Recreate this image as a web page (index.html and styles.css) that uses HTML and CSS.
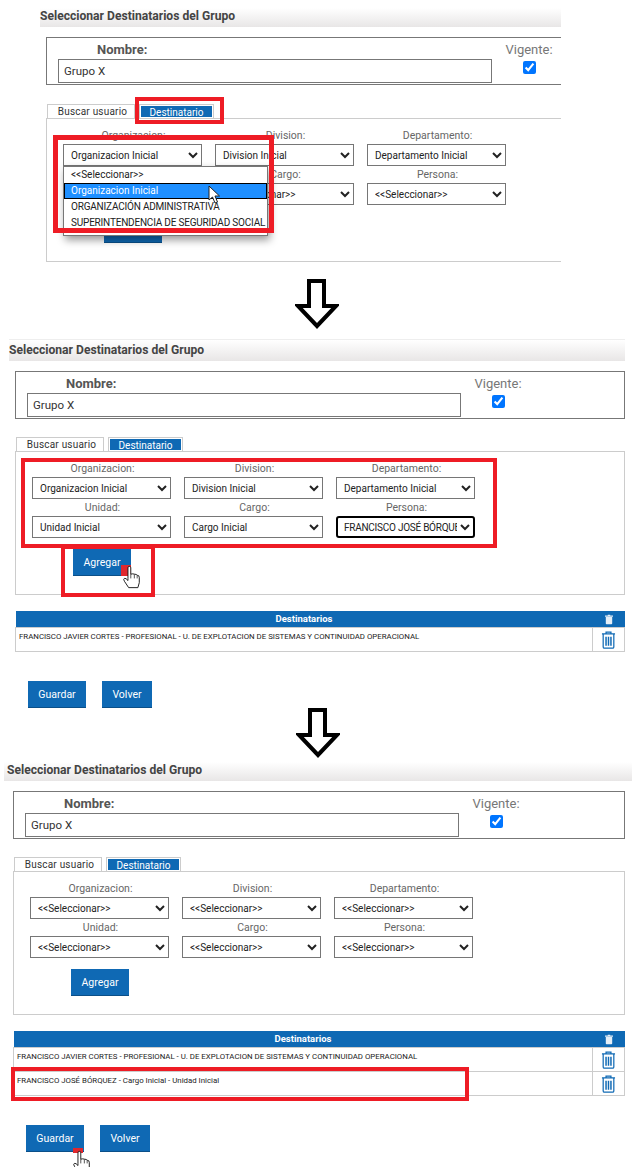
FILE: index.html
```html
<!DOCTYPE html>
<html lang="es">
<head>
<meta charset="utf-8">
<title>Seleccionar Destinatarios del Grupo</title>
<link rel="stylesheet" href="styles.css">
</head>
<body>
<svg class="defs" width="0" height="0" aria-hidden="true">
  <symbol id="trash" viewBox="0 0 18 22">
    <path d="M6 3V1.500h6V3M1 3.500h16M2.500 4v15.500q0 1.500 1.500 1.500h10q1.500 0 1.500-1.500V4" fill="none" stroke="currentColor" stroke-width="1.500"/>
    <path d="M6 7v11M9 7v11M12 7v11" fill="none" stroke="currentColor" stroke-width="1.800"/>
  </symbol>
  <symbol id="trash-solid" viewBox="0 0 10 12">
    <path d="M3.500 1V0h3v1H10v1.500H0V1zM1 3h8v8q0 1-1 1H2q-1 0-1-1z" fill="currentColor"/>
  </symbol>
  <symbol id="hand" viewBox="0 0 24 32">
    <path d="M7 18V3q0-2 2-2t2 2v9q3-1 5 0 3 0 4 1.500 3 0 3 3V24l-2 7H8l-6-9q-2-3 0-4t5 3z" fill="#fff" stroke="#111" stroke-width="1.300"/>
    <path d="M11 12v6M16 12.500V18M20 14v4" fill="none" stroke="#111" stroke-width="1"/>
  </symbol>
  <symbol id="down-arrow" viewBox="0 0 44 50">
    <path d="M14 2h15v25h12L22 47 3 27h11z" fill="#fff" stroke="#000" stroke-width="4" stroke-linejoin="miter"/>
  </symbol>
</svg>

<main class="page">
  <section class="panel panel-one">
    <h2 class="title">Seleccionar Destinatarios del Grupo</h2>
    <div class="name-box">
      <div class="name-col">
        <label class="name-label">Nombre:</label>
        <input class="name-input" type="text" value="Grupo X">
      </div>
      <div class="active-col">
        <span class="active-label">Vigente:</span>
        <input class="active-check" type="checkbox" checked>
      </div>
    </div>
    <div class="tabs">
      <span class="tab">Buscar usuario</span>
      <span class="tab tab-active">Destinatario</span>
    </div>
    <div class="tab-body">
      <div class="filters">
        <label class="field"><span>Organizacion:</span><select><option>Organizacion Inicial</option></select></label>
        <label class="field"><span>Division:</span><select><option>Division Inicial</option></select></label>
        <label class="field"><span>Departamento:</span><select><option>Departamento Inicial</option></select></label>
        <label class="field"><span>Unidad:</span><select><option>&lt;&lt;Seleccionar&gt;&gt;</option></select></label>
        <label class="field"><span>Cargo:</span><select><option>&lt;&lt;Seleccionar&gt;&gt;</option></select></label>
        <label class="field"><span>Persona:</span><select><option>&lt;&lt;Seleccionar&gt;&gt;</option></select></label>
      </div>
      <button class="btn btn-add" type="button">Agregar</button>
    </div>
    <ul class="dropdown">
      <li>&lt;&lt;Seleccionar&gt;&gt;</li>
      <li class="selected">Organizacion Inicial</li>
      <li class="upper">ORGANIZACIÓN ADMINISTRATIVA</li>
      <li class="upper">SUPERINTENDENCIA DE SEGURIDAD SOCIAL</li>
    </ul>
  </section>

  <section class="panel panel-two">
    <h2 class="title title-ruled">Seleccionar Destinatarios del Grupo</h2>
    <div class="name-box">
      <div class="name-col">
        <label class="name-label">Nombre:</label>
        <input class="name-input" type="text" value="Grupo X">
      </div>
      <div class="active-col">
        <span class="active-label">Vigente:</span>
        <input class="active-check" type="checkbox" checked>
      </div>
    </div>
    <div class="tabs">
      <span class="tab">Buscar usuario</span>
      <span class="tab tab-active">Destinatario</span>
    </div>
    <div class="tab-body">
      <div class="filters">
        <label class="field"><span>Organizacion:</span><select><option>Organizacion Inicial</option></select></label>
        <label class="field"><span>Division:</span><select><option>Division Inicial</option></select></label>
        <label class="field"><span>Departamento:</span><select><option>Departamento Inicial</option></select></label>
        <label class="field"><span>Unidad:</span><select><option>Unidad Inicial</option></select></label>
        <label class="field"><span>Cargo:</span><select><option>Cargo Inicial</option></select></label>
        <label class="field"><span>Persona:</span><select class="focused"><option>FRANCISCO JOSÉ BÓRQUEZ</option></select></label>
      </div>
      <button class="btn btn-add" type="button">Agregar</button>
    </div>
    <table class="recipients">
      <thead><tr><th>Destinatarios</th><th class="col-icon"><svg class="icon-head"><use href="#trash-solid"/></svg></th></tr></thead>
      <tbody>
        <tr><td>FRANCISCO JAVIER CORTES - PROFESIONAL - U. DE EXPLOTACION DE SISTEMAS Y CONTINUIDAD OPERACIONAL</td><td class="col-icon"><svg class="icon-row"><use href="#trash"/></svg></td></tr>
      </tbody>
    </table>
    <div class="actions">
      <button class="btn" type="button">Guardar</button>
      <button class="btn btn-back" type="button">Volver</button>
    </div>
  </section>

  <section class="panel panel-three">
    <h2 class="title title-wide">Seleccionar Destinatarios del Grupo</h2>
    <div class="name-box">
      <div class="name-col">
        <label class="name-label">Nombre:</label>
        <input class="name-input" type="text" value="Grupo X">
      </div>
      <div class="active-col">
        <span class="active-label">Vigente:</span>
        <input class="active-check" type="checkbox" checked>
      </div>
    </div>
    <div class="tabs">
      <span class="tab">Buscar usuario</span>
      <span class="tab tab-active">Destinatario</span>
    </div>
    <div class="tab-body">
      <div class="filters">
        <label class="field"><span>Organizacion:</span><select><option>&lt;&lt;Seleccionar&gt;&gt;</option></select></label>
        <label class="field"><span>Division:</span><select><option>&lt;&lt;Seleccionar&gt;&gt;</option></select></label>
        <label class="field"><span>Departamento:</span><select><option>&lt;&lt;Seleccionar&gt;&gt;</option></select></label>
        <label class="field"><span>Unidad:</span><select><option>&lt;&lt;Seleccionar&gt;&gt;</option></select></label>
        <label class="field"><span>Cargo:</span><select><option>&lt;&lt;Seleccionar&gt;&gt;</option></select></label>
        <label class="field"><span>Persona:</span><select><option>&lt;&lt;Seleccionar&gt;&gt;</option></select></label>
      </div>
      <button class="btn btn-add" type="button">Agregar</button>
    </div>
    <table class="recipients">
      <thead><tr><th>Destinatarios</th><th class="col-icon"><svg class="icon-head"><use href="#trash-solid"/></svg></th></tr></thead>
      <tbody>
        <tr><td>FRANCISCO JAVIER CORTES - PROFESIONAL - U. DE EXPLOTACION DE SISTEMAS Y CONTINUIDAD OPERACIONAL</td><td class="col-icon"><svg class="icon-row"><use href="#trash"/></svg></td></tr>
        <tr><td>FRANCISCO JOSÉ BÓRQUEZ - Cargo Inicial - Unidad Inicial</td><td class="col-icon"><svg class="icon-row"><use href="#trash"/></svg></td></tr>
      </tbody>
    </table>
    <div class="actions">
      <button class="btn" type="button">Guardar</button>
      <button class="btn btn-back" type="button">Volver</button>
    </div>
  </section>

  <div class="mark mark-tab"></div>
  <div class="mark mark-list"></div>
  <div class="mark mark-filters"></div>
  <div class="mark mark-add"></div>
  <div class="mark mark-row"></div>
  <div class="patch patch-add"></div>
  <div class="patch patch-save"></div>
  <svg class="arrow arrow-one"><use href="#down-arrow"/></svg>
  <svg class="arrow arrow-two"><use href="#down-arrow"/></svg>
  <svg class="hand hand-add"><use href="#hand"/></svg>
  <svg class="hand hand-save"><use href="#hand"/></svg>
  <svg class="pointer" viewBox="0 0 12 19"><path d="M1 1v14l3.500-3 2.500 6 2.500-1-2.500-6h4.500z" fill="#fff" stroke="#222" stroke-width="1"/></svg>
</main>
</body>
</html>
```

FILE: styles.css
```css
* { box-sizing: border-box; }

html, body {
  margin: 0;
  padding: 0;
  background: #fff;
}

body {
  height: 1167px;
  overflow: hidden;
  font-family: Roboto, "Liberation Sans", sans-serif;
  color: #333;
}

.defs { position: absolute; }

.page {
  position: relative;
  height: 1167px;
  overflow: hidden;
  padding-top: 8px;
}

.panel { position: relative; }

.panel-one {
  margin-left: 40px;
  width: 521px;
}

.panel-two {
  margin: 77px 0 0 9px;
  width: 616px;
}

.panel-three {
  margin: 54px 0 0 7px;
  width: 618px;
}

.title {
  margin: 0;
  height: 19px;
  font-size: 12.100px;
  font-weight: 700;
  line-height: 17px;
  color: #444;
  background: linear-gradient(#fff, #e8e6e6);
}

.title-ruled {
  height: 22px;
  line-height: 21px;
  border-top: 1px solid #eee;
}

.title-wide {
  margin: 0 -7px 0 -3px;
  padding-left: 3px;
}

.name-box {
  display: flex;
  margin: 10px 0 0 6px;
  height: 48px;
  border: 1px solid #777;
  border-right: 0;
}

.panel-two .name-box,
.panel-three .name-box {
  border-right: 1px solid #777;
}

.name-col {
  display: flex;
  flex-direction: column;
  width: 434px;
  margin-left: 11px;
}

.name-label {
  height: 21px;
  padding: 4px 0 0 39px;
  font-size: 13px;
  font-weight: 700;
  line-height: 16px;
  color: #555;
}

.name-input {
  width: 434px;
  height: 24px;
  padding: 0 5px;
  border: 1px solid #777;
  border-radius: 0;
  font: 11.500px Roboto, sans-serif;
  color: #333;
  outline: 0;
}

.active-col {
  display: flex;
  flex-direction: column;
  align-items: center;
  width: 46px;
  margin-left: 14px;
}

.active-label {
  height: 22px;
  padding-top: 4px;
  font-size: 13px;
  line-height: 16px;
  color: #777;
}

.active-check {
  width: 13px;
  height: 13px;
  margin: 1px 0 0;
}

.tabs {
  display: flex;
  gap: 4px;
  align-items: flex-end;
  margin: 18px 0 0 7px;
  height: 14px;
}

.panel-one .tabs { margin-top: 19px; }

.tab {
  width: 88px;
  height: 14px;
  padding-left: 3px;
  border: 1px solid #ccc;
  border-bottom: 0;
  font-size: 10px;
  line-height: 13px;
  letter-spacing: .2px;
  text-align: center;
  color: #333;
  background: #fff;
}

.tab-active {
  width: 75px;
  padding-left: 0;
  line-height: 15px;
  letter-spacing: 0;
  color: #fff;
  background: #0f69b4;
  box-shadow: 0 0 0 1px #fff inset;
}

.tab-body {
  margin-left: 6px;
  height: 144px;
  padding: 9px 0 0 16px;
  border: 1px solid #ccc;
  border-right: 0;
}

.panel-two .tab-body,
.panel-three .tab-body {
  border-right: 1px solid #ccc;
}

.filters {
  display: grid;
  grid-template-columns: repeat(3, 139px);
  column-gap: 13px;
}

.field {
  display: flex;
  flex-direction: column;
  height: 39px;
  font-size: 10.500px;
  line-height: 16px;
  text-align: center;
  color: #666;
}

.field span { padding-left: 2px; }

.field select {
  width: 139px;
  height: 22px;
  padding: 0 0 0 3px;
  border: 1px solid #767676;
  border-radius: 0;
  font: 10px Roboto, sans-serif;
  color: #222;
  background-color: #fff;
}

.field select.focused {
  padding-left: 2px;
  border: 2px solid #000;
  border-radius: 3px;
  letter-spacing: -.25px;
}

.btn {
  display: block;
  width: 58px;
  height: 27px;
  padding: 0;
  border: 0;
  border-bottom: 1px solid #0b4f88;
  font: 10.500px Roboto, sans-serif;
  color: #fff;
  background: #0f69b4;
}

.btn-add { margin: 10px 0 0 41px; }

.btn-back { width: 50px; }

.dropdown {
  position: absolute;
  top: 158px;
  left: 23px;
  width: 205px;
  height: 70px;
  margin: 0;
  padding: 0;
  list-style: none;
  font-size: 10px;
  line-height: 16px;
  color: #222;
  background: #fff;
  border: 1px solid #777;
  box-shadow: 2px 4px 8px rgba(0, 0, 0, .4);
}

.dropdown li {
  height: 16px;
  padding-left: 7px;
  white-space: nowrap;
}

.dropdown .upper { letter-spacing: -.2px; }

.dropdown .selected {
  padding-left: 6px;
  border: 1px solid #000;
  outline: 1px solid #000;
  outline-offset: -1px;
  line-height: 13px;
  color: #fff;
  background: #1e8fff;
}

.recipients {
  margin: 16px 0 0 6px;
  width: calc(100% - 6px);
  border-collapse: collapse;
  table-layout: fixed;
}

.recipients th {
  height: 16px;
  padding: 0;
  font-size: 9.500px;
  font-weight: 700;
  line-height: 16px;
  color: #fff;
  background: #0f69b4;
}

.recipients td {
  height: 24px;
  padding: 3px 3px 0;
  vertical-align: top;
  font-size: 7.850px;
  line-height: 12px;
  color: #222;
  border: 1px solid #ccc;
}

.recipients .col-icon {
  width: 32px;
  padding: 0;
  text-align: center;
  vertical-align: middle;
}

.recipients td.col-icon {
  padding-top: 3px;
  vertical-align: top;
}

.icon-head {
  display: block;
  width: 8px;
  height: 11px;
  margin: 0 auto;
  color: #e6eef6;
}

.icon-row {
  display: block;
  width: 15px;
  height: 18px;
  margin: 0 auto;
  color: #0f69b4;
}

.actions {
  display: flex;
  gap: 16px;
  margin: 29px 0 0 19px;
}

.mark {
  position: absolute;
  border: 4px solid #ee1c25;
}

.mark-tab { left: 135px; top: 97px; width: 89px; height: 27px; }
.mark-list { left: 53px; top: 135px; width: 221px; height: 98px; border-width: 5px; }
.mark-filters { left: 21px; top: 458px; width: 476px; height: 90px; }
.mark-add { left: 61px; top: 545px; width: 94px; height: 52px; }
.mark-row { left: 11px; top: 1067px; width: 458px; height: 34px; }

.patch {
  position: absolute;
  background: #e0282e;
}

.patch-add { left: 121px; top: 565px; width: 10px; height: 11px; }
.patch-save { left: 73px; top: 1148px; width: 10px; height: 5px; }

.arrow {
  position: absolute;
  width: 44px;
  height: 50px;
}

.arrow-one { left: 295px; top: 279px; }
.arrow-two { left: 296px; top: 708px; }

.hand {
  position: absolute;
  width: 17px;
  height: 24px;
}

.hand-add { left: 123px; top: 565px; }
.hand-save { left: 73px; top: 1150px; }

.pointer {
  position: absolute;
  left: 208px;
  top: 185px;
  width: 12px;
  height: 19px;
}
```
